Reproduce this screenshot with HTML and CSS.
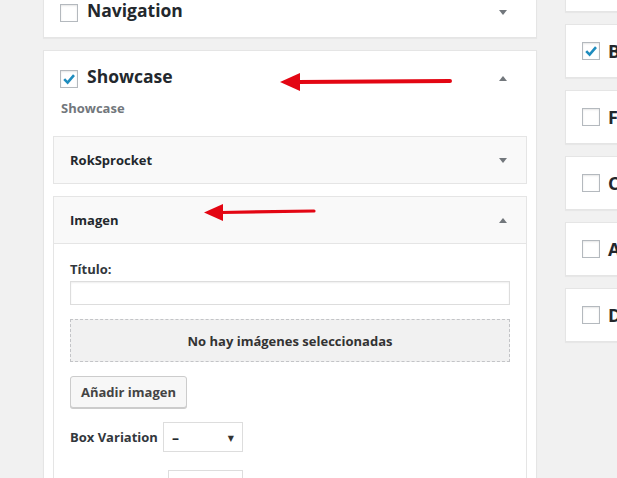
FILE: index.html
```html
<!DOCTYPE html>
<html>
<head>
<meta charset="utf-8">
<link rel="stylesheet" href="styles.css">
</head>
<body>
<div class="page">
  <div class="main">
    <section class="card">
      <div class="card-head">
        <span class="cb"></span>
        <h2 class="card-title">Navigation</h2>
        <span class="tri down"></span>
      </div>
    </section>
    <section class="card card-show">
      <div class="card-head">
        <span class="cb"><svg viewBox="0 0 16 16" width="16" height="16"><path d="M3.2 8.2 L6.6 11.6 L13 4.2" fill="none" stroke="#1e8cbe" stroke-width="2.6"/></svg></span>
        <h2 class="card-title">Showcase</h2>
        <span class="tri up"></span>
      </div>
      <p class="sub">Showcase</p>
      <div class="acc">
        <div class="acc-head"><span>RokSprocket</span><span class="tri down"></span></div>
      </div>
      <div class="acc">
        <div class="acc-head acc-head-open"><span>Imagen</span><span class="tri up"></span></div>
        <div class="acc-body">
          <label class="lbl" for="titulo">Título:</label>
          <input class="txt" id="titulo" type="text">
          <div class="drop">No hay imágenes seleccionadas</div>
          <button class="btn" type="button">Añadir imagen</button>
          <div class="row">
            <span class="lbl">Box Variation</span>
            <div class="sel"><span class="dash">–</span><span class="caret">▼</span></div>
          </div>
          <div class="row row2">
            <div class="sel sel2"></div>
          </div>
        </div>
      </div>
    </section>
  </div>
  <aside class="side">
    <div class="scard"><span class="cb"></span><span class="sletter">E</span></div>
    <div class="scard"><span class="cb"><svg viewBox="0 0 16 16" width="16" height="16"><path d="M3.2 8.2 L6.6 11.6 L13 4.2" fill="none" stroke="#1e8cbe" stroke-width="2.6"/></svg></span><span class="sletter">B</span></div>
    <div class="scard"><span class="cb"></span><span class="sletter">F</span></div>
    <div class="scard"><span class="cb"></span><span class="sletter">C</span></div>
    <div class="scard"><span class="cb"></span><span class="sletter">A</span></div>
    <div class="scard"><span class="cb"></span><span class="sletter">D</span></div>
  </aside>
</div>
<svg class="arrow arrow1" width="172" height="18" viewBox="0 0 172 18">
  <path d="M0 9 L20 0 L20 18 Z" fill="#e30613"/>
  <path d="M18 9 L170 8" stroke="#e30613" stroke-width="4" stroke-linecap="round"/>
</svg>
<svg class="arrow arrow2" width="112" height="18" viewBox="0 0 112 18">
  <path d="M0 8.5 L19 0 L19 17 Z" fill="#e30613"/>
  <path d="M17 8.5 L110 7" stroke="#e30613" stroke-width="3.2" stroke-linecap="round"/>
</svg>
</body>
</html>
```

FILE: styles.css
```css
html, body {
  margin: 0;
  padding: 0;
}
body {
  background: #f1f1f1;
  font-family: "Open Sans", "DejaVu Sans", sans-serif;
  color: #23282d;
  overflow: hidden;
  height: 478px;
  position: relative;
}
.page {
  display: flex;
  align-items: flex-start;
  gap: 28px;
  padding-left: 43px;
  margin-top: -16px;
}
.main {
  width: 494px;
  flex: none;
  display: flex;
  flex-direction: column;
  gap: 12px;
}
.card {
  background: #fff;
  border: 1px solid #e5e5e5;
  box-shadow: 0 1px 1px rgba(0,0,0,.04);
  padding: 19px 0 16px;
}
.card-show {
  padding: 19px 9px 0;
  height: 560px;
}
.card-head {
  display: flex;
  align-items: center;
  height: 17px;
  padding: 0 29px 0 16px;
}
.card-show .card-head {
  padding: 0 20px 0 7px;
}
.cb {
  width: 16px;
  height: 16px;
  flex: none;
  border: 1px solid #b4b9be;
  background: #fff;
  box-shadow: inset 0 1px 2px rgba(0,0,0,.1);
  display: flex;
}
.card-title {
  margin: 0 0 0 9px;
  font-size: 17.5px;
  line-height: 17px;
  font-weight: 700;
  position: relative;
  top: -2px;
}
.tri {
  margin-left: auto;
  width: 0;
  height: 0;
  border-left: 4px solid transparent;
  border-right: 4px solid transparent;
}
.tri.down { border-top: 5px solid #72777c; }
.tri.up { border-bottom: 5px solid #72777c; }
.sub {
  margin: 12px 0 19px 8px;
  font-size: 13px;
  line-height: 18px;
  font-weight: 700;
  color: #72777c;
}
.acc {
  border: 1px solid #e5e5e5;
  background: #fff;
  margin-bottom: 12px;
}
.acc-head {
  height: 46px;
  background: #f9f9f9;
  display: flex;
  align-items: center;
  padding: 0 19px 0 16px;
  font-size: 13px;
  font-weight: 700;
  color: #23282d;
}
.acc-head-open {
  border-bottom: 1px solid #e5e5e5;
}
.acc-body {
  padding: 16px 16px 40px;
  display: flex;
  flex-direction: column;
  align-items: flex-start;
}
.lbl {
  font-size: 13px;
  line-height: 18px;
  font-weight: 700;
  color: #32373c;
}
.txt {
  margin-top: 3px;
  width: 440px;
  height: 24px;
  box-sizing: border-box;
  border: 1px solid #ddd;
  box-shadow: inset 0 1px 2px rgba(0,0,0,.07);
  background: #fff;
  padding: 0;
}
.drop {
  margin-top: 14px;
  width: 440px;
  height: 43px;
  box-sizing: border-box;
  border: 1px dashed #c3c4c7;
  background: #f1f1f1;
  display: flex;
  align-items: center;
  justify-content: center;
  font-size: 13px;
  font-weight: 700;
  color: #333;
}
.btn {
  margin-top: 14px;
  height: 32px;
  width: 117px;
  box-sizing: border-box;
  background: #f7f7f7;
  border: 1px solid #ccc;
  border-radius: 3px;
  box-shadow: 0 1px 0 #ccc;
  font-family: inherit;
  font-size: 13px;
  font-weight: 700;
  color: #444;
  padding: 0;
}
.row {
  margin-top: 14px;
  display: flex;
  align-items: center;
  gap: 5px;
}
.row2 {
  margin-top: 18px;
  padding-left: 98px;
}
.sel {
  width: 80px;
  height: 30px;
  box-sizing: border-box;
  border: 1px solid #ddd;
  background: #fff;
  display: flex;
  align-items: center;
  padding: 0 8px 0 8px;
  font-size: 14px;
  font-weight: 700;
  color: #23282d;
}
.sel2 {
  width: 75px;
}
.dash { flex: 1; }
.caret { font-size: 8px; color: #333; }
.side {
  flex: none;
  width: 200px;
  margin-top: -26px;
  display: flex;
  flex-direction: column;
  gap: 12px;
}
.scard {
  height: 54px;
  box-sizing: border-box;
  background: #fff;
  border: 1px solid #e5e5e5;
  box-shadow: 0 1px 1px rgba(0,0,0,.04);
  display: flex;
  align-items: center;
  padding-left: 16px;
  gap: 8px;
}
.sletter {
  font-size: 18px;
  font-weight: 700;
  color: #23282d;
}
.arrow {
  position: absolute;
}
.arrow1 { left: 280px; top: 73px; }
.arrow2 { left: 204px; top: 204px; }
```
